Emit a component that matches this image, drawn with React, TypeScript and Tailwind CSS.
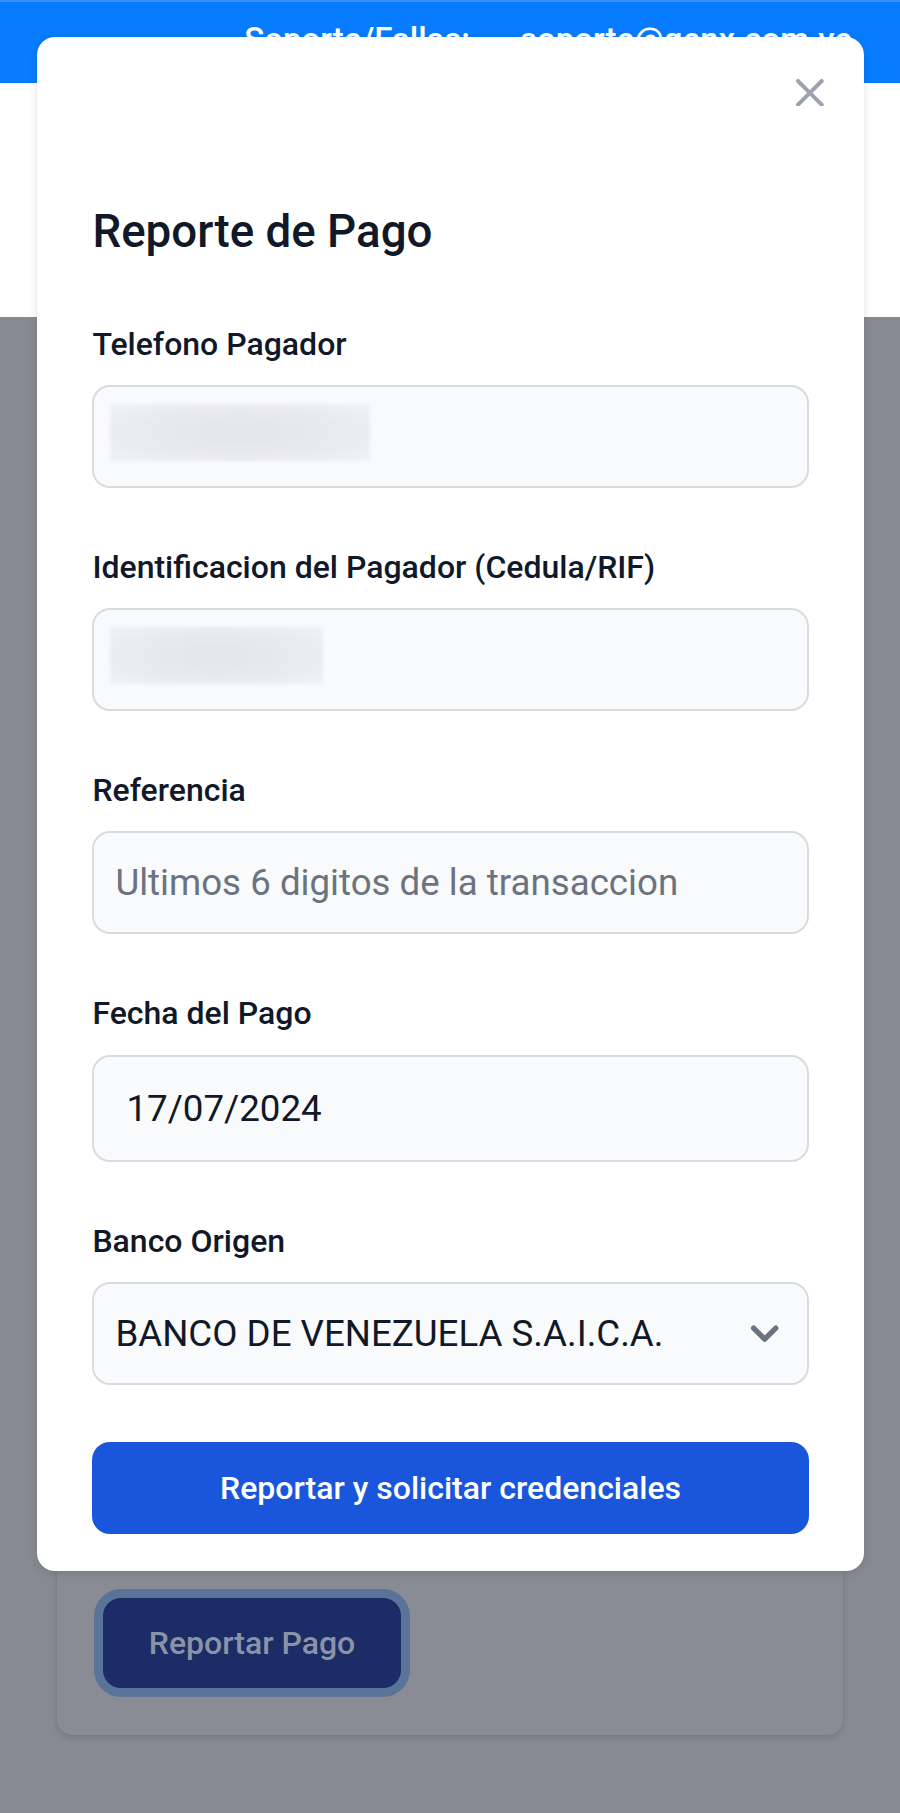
import React from "react";

function Label({ children }: { children: React.ReactNode }) {
  return (
    <label className="block text-[32px] leading-[46.2px] font-medium text-[#111827] mb-[18.5px]">
      {children}
    </label>
  );
}

function BlurInput({ blurW }: { blurW: number }) {
  return (
    <div className="h-[103px] w-full rounded-[18px] border-[2px] border-[#d9dbe0] bg-[#f9fafb] pl-[16px] pt-[17px]">
      <div
        className="h-[57px] blur-[1.5px] bg-[radial-gradient(ellipse_at_center,#e3e4e8_0%,#e9eaed_55%,#f1f2f4_100%)]"
        style={{ width: blurW }}
      />
    </div>
  );
}

export default function App() {
  return (
    <div className="relative w-[900px] min-h-[1813px] bg-[#878a92] font-[Roboto,'Noto_Sans',sans-serif]">
      {/* top bar */}
      <div className="h-[83px] bg-[#077cff] border-t-[2px] border-[#3d8ef2] flex justify-end items-start pt-[15px] pr-[48px] gap-[50px] text-white text-[33px] leading-[46.2px] font-medium">
        <span>Soporte/Fallas:</span>
        <span>soporte@genx.com.ve</span>
      </div>
      {/* white header */}
      <div className="h-[234px] bg-white" />
      {/* main content (dimmed) */}
      <div className="pt-[40px] px-[57px] pb-[78px]">
        <div className="h-[1378px] rounded-[16px] bg-[#898c94] shadow-[0_3px_6px_rgba(0,0,0,0.12)] flex flex-col justify-end px-[46px] pb-[47px]">
          <div className="flex">
            <button className="h-[90px] w-[298px] rounded-[18px] bg-[#1b2c66] ring-[9px] ring-[#5a7399] text-[32px] font-medium text-[#8b93a8]">
              Reportar Pago
            </button>
          </div>
        </div>
      </div>

      {/* modal */}
      <div className="absolute left-[37px] top-[37px] w-[827px] rounded-[18px] bg-white shadow-[0_2px_8px_rgba(0,0,0,0.12)] px-[55.4px] pt-[163px] pb-[37px]">
        <button className="absolute right-[17px] top-[18.5px] w-[74px] h-[74px] flex items-center justify-center text-[#9ca3af]">
          <svg width="27.7" height="27.7" viewBox="0 0 14 14" fill="none">
            <path
              d="m1 1 6 6m0 0 6 6M7 7l6-6M7 7l-6 6"
              stroke="currentColor"
              strokeWidth="2"
              strokeLinecap="round"
              strokeLinejoin="round"
            />
          </svg>
        </button>
        <h3 className="text-[45.7px] leading-[64.6px] font-medium text-[#111827] mb-[56px]">
          Reporte de Pago
        </h3>

        <div className="mb-[55.4px]">
          <Label>Telefono Pagador</Label>
          <BlurInput blurW={260} />
        </div>

        <div className="mb-[55.4px]">
          <Label>Identificacion del Pagador (Cedula/RIF)</Label>
          <BlurInput blurW={213} />
        </div>

        <div className="mb-[55.4px]">
          <Label>Referencia</Label>
          <div className="h-[103px] w-full rounded-[18px] border-[2px] border-[#d9dbe0] bg-[#f9fafb] px-[21px] flex items-center text-[36.7px] text-[#6b7280]">
            Ultimos 6 digitos de la transaccion
          </div>
        </div>

        <div className="mb-[55.4px]">
          <Label>Fecha del Pago</Label>
          <div className="h-[107.6px] w-full rounded-[18px] border-[2px] border-[#d9dbe0] bg-[#f9fafb] px-[32px] flex items-center text-[36.7px] text-[#111827]">
            17/07/2024
          </div>
        </div>

        <div>
          <Label>Banco Origen</Label>
          <div className="h-[102.7px] w-full rounded-[18px] border-[2px] border-[#d9dbe0] bg-[#f9fafb] pl-[21px] pr-[14px] flex items-center justify-between text-[36.7px] text-[#111827]">
            <span>BANCO DE VENEZUELA S.A.I.C.A.</span>
            <svg width="55.4" height="55.4" viewBox="0 0 20 20" fill="none">
              <path
                d="M6 8l4 4 4-4"
                stroke="#6b7280"
                strokeWidth="1.9"
                strokeLinecap="round"
                strokeLinejoin="round"
              />
            </svg>
          </div>
        </div>

        <button className="mt-[57.5px] h-[91.6px] w-full rounded-[18px] bg-[#1a56db] text-white text-[32px] font-medium">
          Reportar y solicitar credenciales
        </button>
      </div>
    </div>
  );
}
